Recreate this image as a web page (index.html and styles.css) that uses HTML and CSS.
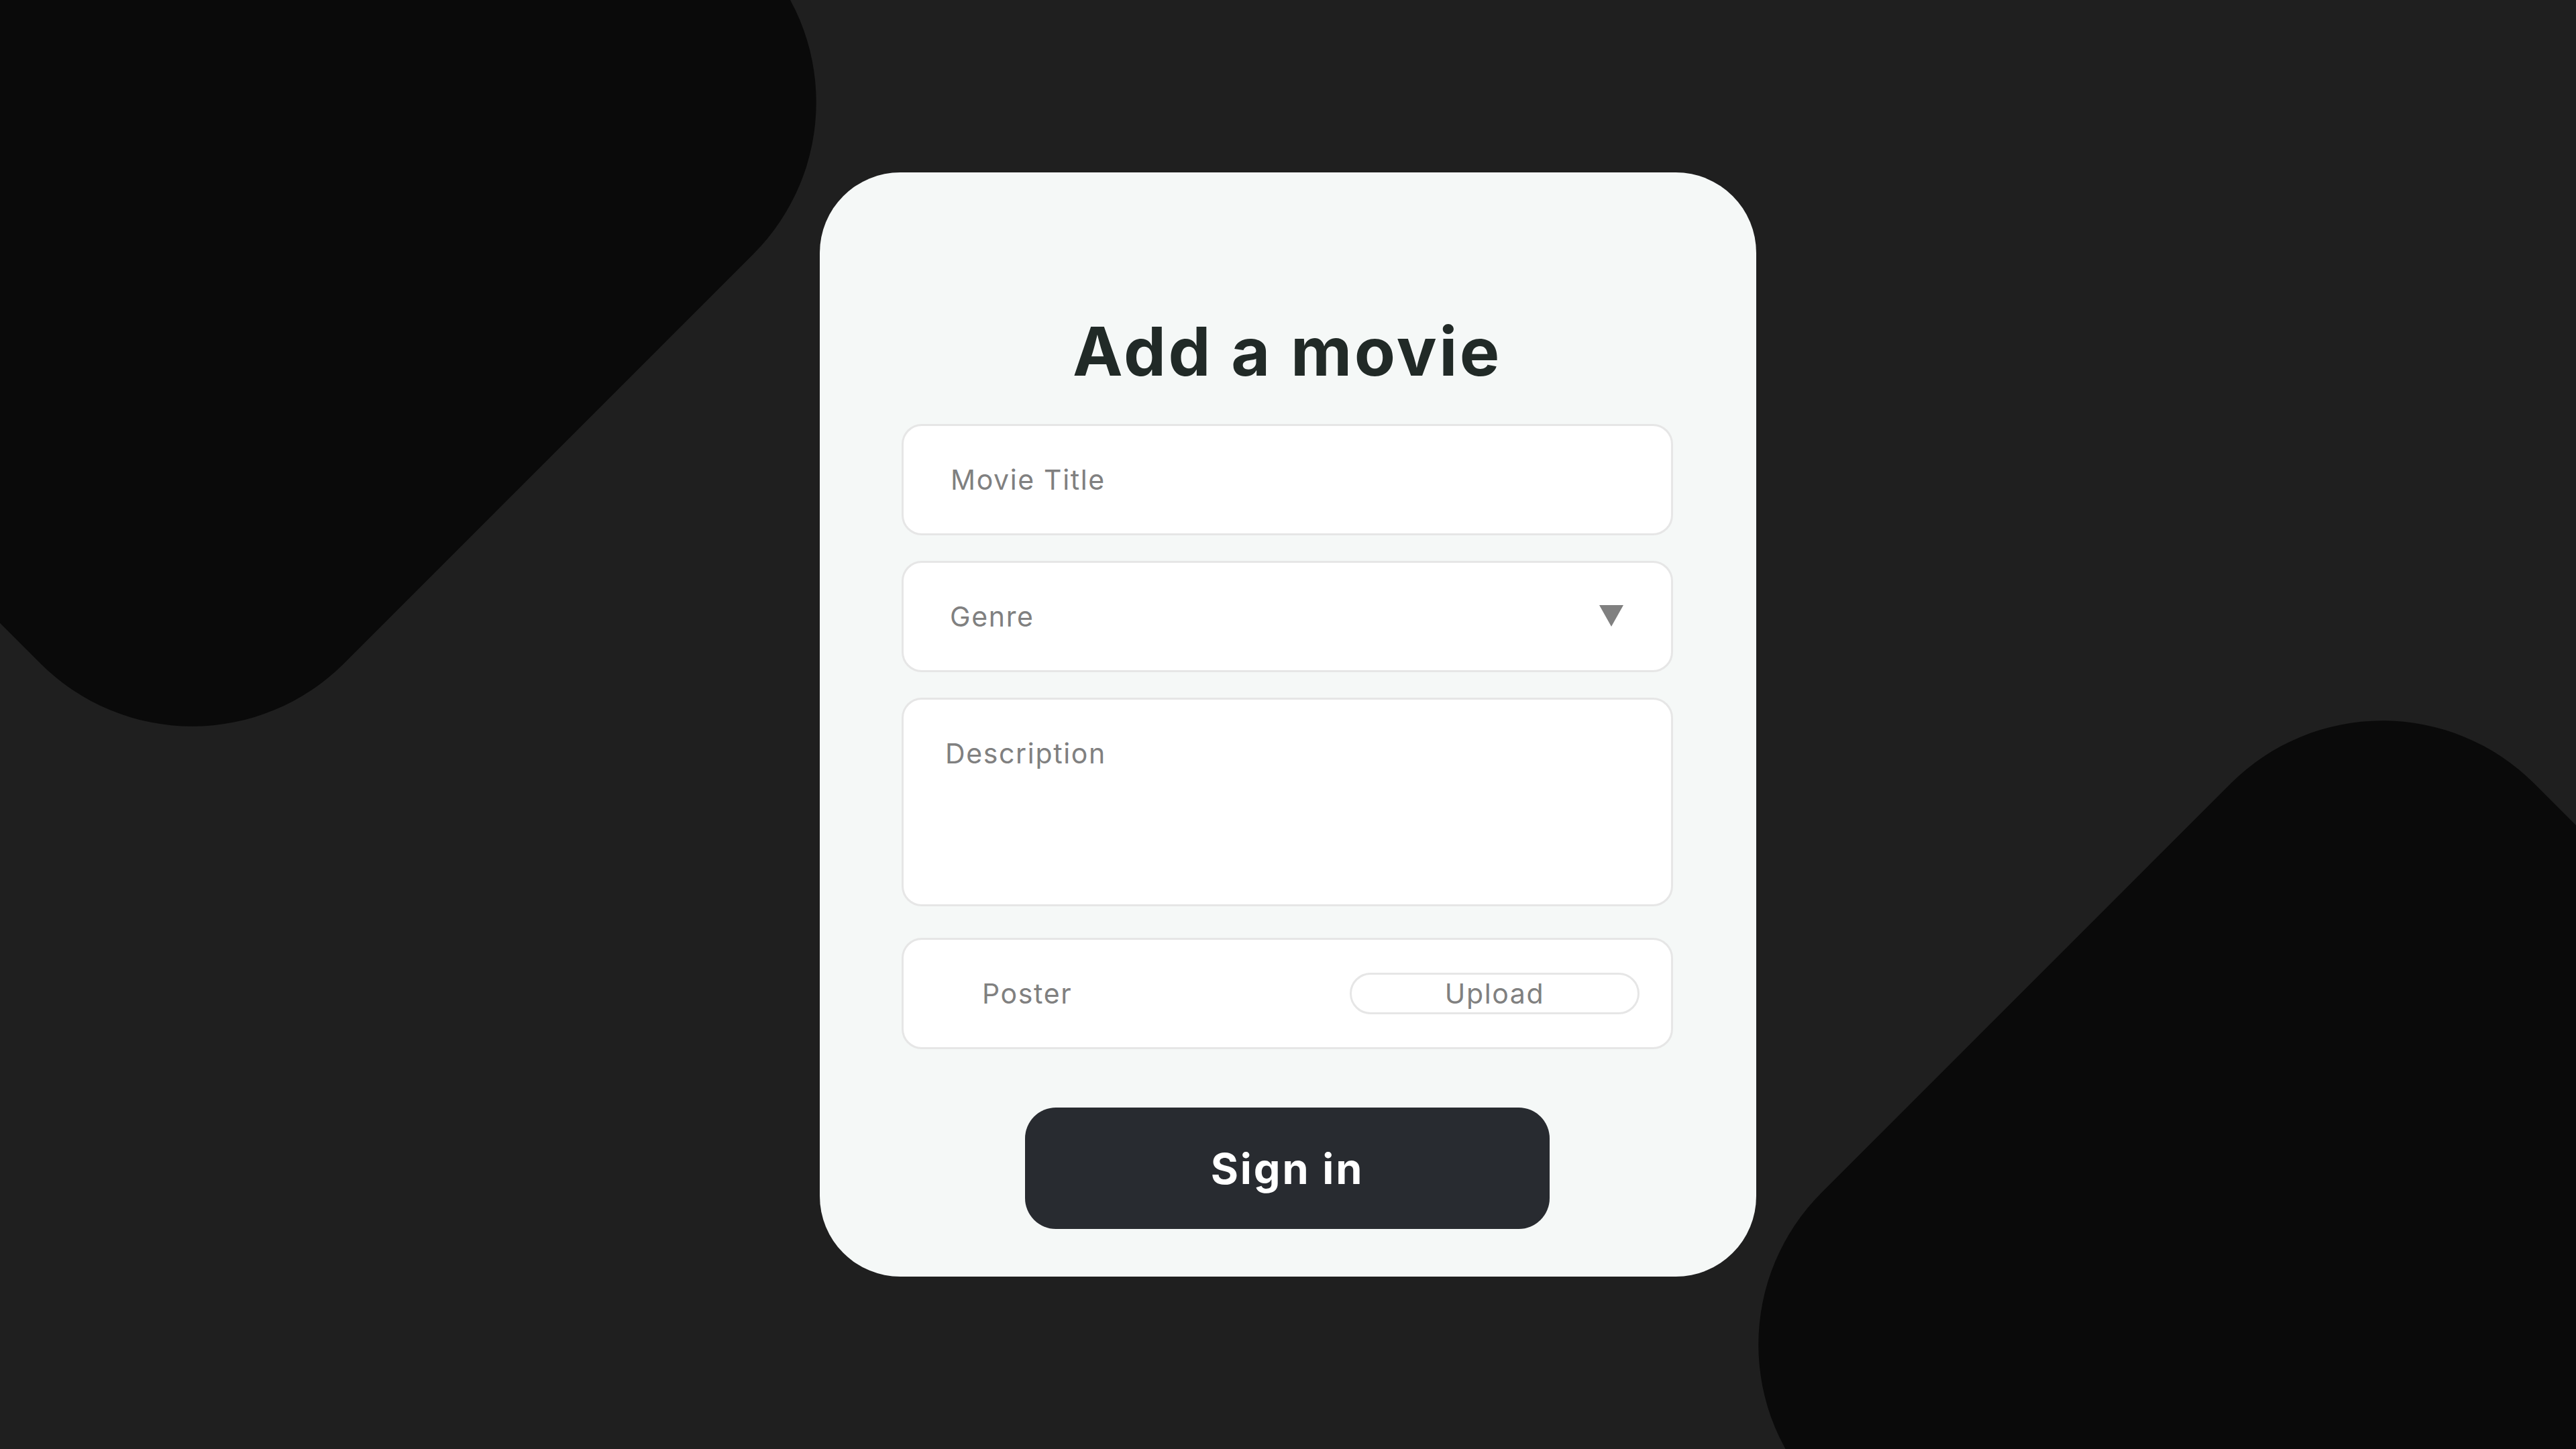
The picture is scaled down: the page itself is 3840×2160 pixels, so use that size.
FILE: index.html
```html
<!DOCTYPE html>
<html lang="en">
<head>
<meta charset="utf-8">
<title>Add a movie</title>
<link rel="stylesheet" href="styles.css">
</head>
<body>
  <div class="backdrop">
    <div class="blob blob-top"></div>
    <div class="blob blob-bottom"></div>
  </div>
  <main class="card">
    <h1 class="title">Add a movie</h1>
    <form class="form">
      <input class="field field-input" type="text" placeholder="Movie Title">
      <div class="field field-select">
        <span class="select-label">Genre</span>
        <svg class="select-arrow" width="36" height="32" viewBox="0 0 36 32"><polygon points="0,0 36,0 18,32" fill="#808080"/></svg>
      </div>
      <textarea class="field field-textarea" placeholder="Description"></textarea>
      <div class="field field-file">
        <span class="file-label">Poster</span>
        <button type="button" class="upload">Upload</button>
      </div>
      <button type="button" class="submit">Sign in</button>
    </form>
  </main>
</body>
</html>
```

FILE: styles.css
```css
* { box-sizing: border-box; }

html, body {
  margin: 0;
  padding: 0;
  width: 100%;
  height: 100%;
}

body {
  background: #1f1f1f;
  font-family: "Inter", "Liberation Sans", sans-serif;
  overflow: hidden;
  position: relative;
  display: flex;
  align-items: center;
  justify-content: center;
}

.backdrop {
  position: absolute;
  inset: 0;
  overflow: hidden;
}

.blob {
  position: absolute;
  width: 1503px;
  height: 1503px;
  background: #0a0a0a;
  border-radius: 320px;
  transform: rotate(45deg);
}

.blob-top {
  left: -465px;
  top: -599px;
}

.blob-bottom {
  left: 2800px;
  top: 1253px;
}

.card {
  position: relative;
  width: 1396px;
  height: 1646px;
  background: #f5f8f7;
  border-radius: 120px;
  padding: 217px 124px 0 122px;
  display: flex;
  flex-direction: column;
}

.title {
  margin: 0;
  font-size: 100px;
  line-height: 100px;
  height: 100px;
  font-weight: 700;
  letter-spacing: 0.035em;
  color: #212a27;
  text-align: center;
}

.form {
  margin-top: 58px;
  display: flex;
  flex-direction: column;
}

.field {
  width: 100%;
  height: 166px;
  background: #ffffff;
  border: 3px solid #e6e6e6;
  border-radius: 30px;
  font-family: "Inter", "Liberation Sans", sans-serif;
  font-size: 41px;
  letter-spacing: 0.04em;
  color: #808080;
  outline: none;
}

.field + .field { margin-top: 38px; }

.field-input {
  padding: 0 70px;
}

.field-input::placeholder,
.field-textarea::placeholder {
  color: #808080;
  opacity: 1;
}

.field-select {
  display: flex;
  align-items: center;
  justify-content: space-between;
  padding: 0 71px 0 69px;
}

.select-arrow {
  display: block;
  margin-top: -3px;
}

.field-textarea {
  height: 311px;
  resize: none;
  padding: 55px 62px;
  line-height: normal;
}

.field.field-file {
  margin-top: 47px;
  display: flex;
  align-items: center;
  justify-content: space-between;
  padding: 0 47px 0 117px;
}

.upload {
  width: 432px;
  height: 62px;
  background: #ffffff;
  border: 3px solid #e6e6e6;
  border-radius: 31px;
  font-family: "Inter", "Liberation Sans", sans-serif;
  font-size: 41px;
  letter-spacing: 0.04em;
  color: #808080;
  padding: 0;
  line-height: 1;
}

.submit {
  align-self: center;
  margin-top: 87px;
  width: 782px;
  height: 181px;
  background: #282b30;
  border: none;
  border-radius: 46px;
  color: #ffffff;
  font-family: "Inter", "Liberation Sans", sans-serif;
  font-size: 63px;
  font-weight: 700;
  letter-spacing: 0.045em;
  padding: 0;
}
```
